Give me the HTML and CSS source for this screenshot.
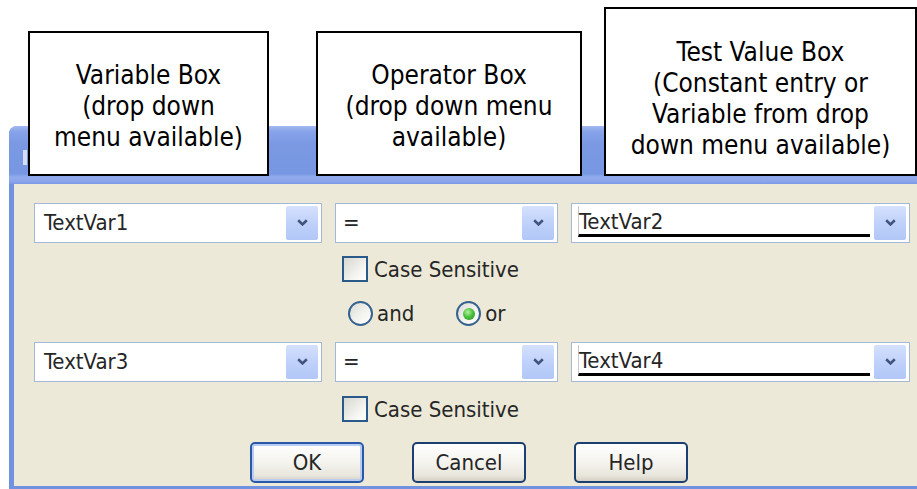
FILE: index.html
```html
<!DOCTYPE html>
<html lang="en">
<head>
    <meta charset="UTF-8">
    <meta name="viewport" content="width=device-width, initial-scale=1.0">
    <title>Condition Dialog</title>
    <link rel="stylesheet" href="styles.css">
</head>
<body>
    <div class="callouts">
        <div class="callout callout-var">
            <p>Variable Box<br>(drop down<br>menu available)</p>
        </div>
        <div class="callout callout-op">
            <p>Operator Box<br>(drop down menu<br>available)</p>
        </div>
        <div class="callout callout-test">
            <p>Test Value Box<br>(Constant entry or<br>Variable from drop<br>down menu available)</p>
        </div>
    </div>

    <div class="window">
        <div class="titlebar"><span class="title-icon"></span></div>
        <div class="client">
            <div class="cond-row">
                <div class="combo combo-var">
                    <span class="combo-text">TextVar1</span>
                    <span class="combo-btn"><svg width="11" height="7" viewBox="0 0 11 7"><path d="M1.2 1.2 L5.5 5.4 L9.8 1.2" fill="none" stroke="#40547e" stroke-width="2.6"/></svg></span>
                </div>
                <div class="combo combo-op">
                    <span class="combo-text">=</span>
                    <span class="combo-btn"><svg width="11" height="7" viewBox="0 0 11 7"><path d="M1.2 1.2 L5.5 5.4 L9.8 1.2" fill="none" stroke="#40547e" stroke-width="2.6"/></svg></span>
                </div>
                <div class="combo combo-test">
                    <span class="combo-edit">TextVar2</span>
                    <span class="combo-btn"><svg width="11" height="7" viewBox="0 0 11 7"><path d="M1.2 1.2 L5.5 5.4 L9.8 1.2" fill="none" stroke="#40547e" stroke-width="2.6"/></svg></span>
                </div>
            </div>

            <label class="check-row">
                <span class="checkbox"></span>
                <span>Case Sensitive</span>
            </label>

            <div class="radio-row">
                <label class="radio"><span class="radio-dot"></span><span>and</span></label>
                <label class="radio"><span class="radio-dot checked"></span><span>or</span></label>
            </div>

            <div class="cond-row cond-row-2">
                <div class="combo combo-var">
                    <span class="combo-text">TextVar3</span>
                    <span class="combo-btn"><svg width="11" height="7" viewBox="0 0 11 7"><path d="M1.2 1.2 L5.5 5.4 L9.8 1.2" fill="none" stroke="#40547e" stroke-width="2.6"/></svg></span>
                </div>
                <div class="combo combo-op">
                    <span class="combo-text">=</span>
                    <span class="combo-btn"><svg width="11" height="7" viewBox="0 0 11 7"><path d="M1.2 1.2 L5.5 5.4 L9.8 1.2" fill="none" stroke="#40547e" stroke-width="2.6"/></svg></span>
                </div>
                <div class="combo combo-test">
                    <span class="combo-edit">TextVar4</span>
                    <span class="combo-btn"><svg width="11" height="7" viewBox="0 0 11 7"><path d="M1.2 1.2 L5.5 5.4 L9.8 1.2" fill="none" stroke="#40547e" stroke-width="2.6"/></svg></span>
                </div>
            </div>

            <label class="check-row check-row-2">
                <span class="checkbox"></span>
                <span>Case Sensitive</span>
            </label>

            <div class="button-row">
                <button class="btn btn-default">OK</button>
                <button class="btn">Cancel</button>
                <button class="btn">Help</button>
            </div>
        </div>
    </div>
</body>
</html>
```

FILE: styles.css
```css
body {
    margin: 0;
    background: #fff;
    overflow: hidden;
    font-family: "DejaVu Sans Condensed", "DejaVu Sans", sans-serif;
    font-stretch: condensed;
}
.callouts {
    position: relative;
    z-index: 1;
    display: flex;
    align-items: flex-end;
    height: 169px;
    padding: 7px 0 0 28px;
}
.callout {
    display: flex;
    align-items: center;
    justify-content: center;
    box-sizing: border-box;
    height: 145px;
    padding-top: 5px;
    background: #fff;
    border: 2px solid #000;
    text-align: center;
    font-size: 26px;
    line-height: 31px;
    color: #000;
}
.callout p {
    margin: 0;
}
.callout-var {
    width: 241px;
}
.callout-op {
    width: 266px;
    margin-left: 47px;
}
.callout-test {
    width: 313px;
    height: 169px;
    padding-top: 14px;
    margin-left: 22px;
}
.window {
    width: 930px;
    margin: -50px 0 0 9px;
    padding: 0 0 3px 5px;
    background: #7192e0;
    border-top-left-radius: 8px;
}
.titlebar {
    height: 58px;
    margin-left: -5px;
    border-top-left-radius: 8px;
    background: linear-gradient(#a3b9f0 0, #86a2e8 6px, #7b99e3 30%, #7797e2 82%, #92abec 88%, #8aa4ea 96%, #7a98e3 100%);
    padding: 24px 0 0 14px;
    box-sizing: border-box;
}
.title-icon {
    display: block;
    width: 4px;
    height: 15px;
    background: #d6def3;
}
.client {
    background: #ece9d8;
    padding: 19px 0 3px 20px;
    font-size: 22px;
    color: #262626;
}
.cond-row {
    display: flex;
    gap: 13px;
}
.cond-row-2 {
    margin-top: 15px;
}
.combo {
    display: flex;
    align-items: center;
    box-sizing: border-box;
    height: 40px;
    padding: 2px 3px 3px 1px;
    background: #fff;
    border: 1px solid #a5b9d6;
}
.combo-var {
    width: 288px;
}
.combo-op {
    width: 223px;
}
.combo-test {
    width: 339px;
}
.combo-text {
    flex: 1;
    padding-left: 8px;
}
.combo-op .combo-text {
    padding-left: 6px;
}
.combo-edit {
    flex: 1;
    align-self: stretch;
    display: flex;
    align-items: center;
    margin: 0 4px 2px 5px;
    border-left: 1px solid #c8c8c8;
    border-bottom: 3px solid #000;
    padding-top: 2px;
}
.combo-btn {
    display: flex;
    align-items: center;
    justify-content: center;
    width: 32px;
    height: 34px;
    border-radius: 2px;
    background: linear-gradient(#d4e0fc, #bccffa 60%, #b2c7f6);
}
.check-row {
    display: flex;
    align-items: center;
    gap: 6px;
    height: 26px;
    margin: 13px 0 0 308px;
}
.check-row-2 {
    margin-top: 14px;
}
.checkbox {
    box-sizing: border-box;
    width: 26px;
    height: 26px;
    border: 2px solid #2a5a8a;
    background: linear-gradient(135deg, #d8d7d0, #f6f6f3 70%, #fff);
}
.radio-row {
    display: flex;
    align-items: center;
    gap: 42px;
    height: 27px;
    margin: 18px 0 0 314px;
}
.radio {
    display: flex;
    align-items: center;
    gap: 4px;
}
.radio-dot {
    display: flex;
    align-items: center;
    justify-content: center;
    box-sizing: border-box;
    width: 25px;
    height: 25px;
    border: 2px solid #35628f;
    border-radius: 50%;
    background: linear-gradient(135deg, #dcdcd6, #f4f4f1 60%, #fff);
}
.radio-dot.checked::after {
    content: "";
    width: 12px;
    height: 12px;
    border-radius: 50%;
    background: radial-gradient(circle at 40% 35%, #b7f0a0 0, #4cc23c 45%, #1e8f1e 100%);
}
.button-row {
    display: flex;
    gap: 48px;
    margin: 20px 0 0 216px;
}
.btn {
    width: 114px;
    height: 41px;
    font-family: inherit;
    font-stretch: condensed;
    font-size: 22px;
    color: #262626;
    border: 2px solid #1c3f72;
    border-radius: 5px;
    background: linear-gradient(#fff, #f4f3ee 50%, #e8e6dc 85%, #d6d0c4);
    padding: 0;
}
.btn-default {
    border-color: #2a58a8;
    box-shadow: inset 0 0 0 2px #b9cdf3;
}
```
